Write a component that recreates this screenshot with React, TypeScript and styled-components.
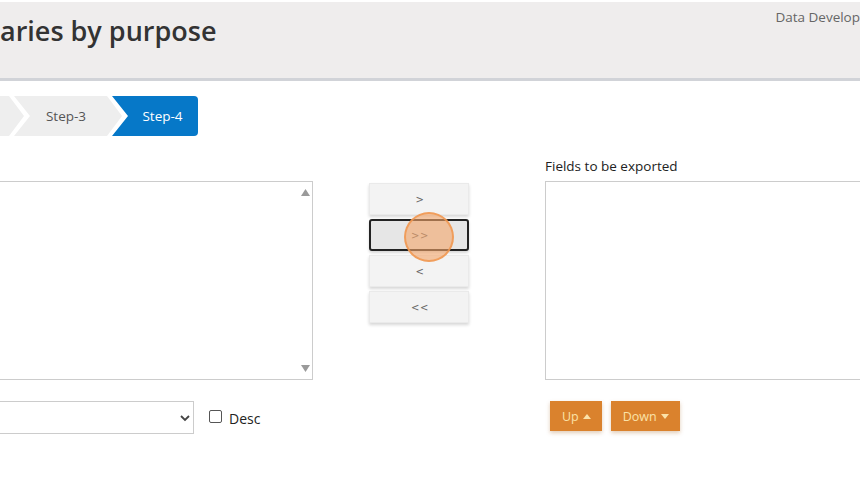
import * as React from "react";
import styled, { createGlobalStyle } from "styled-components";

const GlobalStyle = createGlobalStyle`
  html, body {
    margin: 0;
    padding: 0;
    background: #ffffff;
    overflow: hidden;
  }
  body {
    font-family: "Open Sans", "Noto Sans", sans-serif;
    color: #222222;
  }
`;

const Page = styled.div`
  width: 860px;
  height: 481px;
  padding-top: 2px;
  box-sizing: border-box;
  position: relative;
  overflow: hidden;
`;

const Header = styled.header`
  height: 76px;
  background: #efeded;
  border-bottom: 3px solid #d1d3d8;
  display: flex;
  justify-content: space-between;
  align-items: flex-start;
`;

const Title = styled.h1`
  margin: 11px 0 0 0;
  font-size: 27px;
  font-weight: 600;
  color: #333333;
  line-height: 36px;
`;

const UserName = styled.span`
  margin-top: 6px;
  font-size: 13.5px;
  color: #666666;
  line-height: 18px;
  white-space: nowrap;
`;

const Steps = styled.nav`
  display: flex;
  height: 40px;
  margin-top: 15px;
`;

const Step = styled.div<{ $active?: boolean; $first?: boolean; $last?: boolean; $width: number }>`
  width: ${(p) => p.$width}px;
  height: 40px;
  box-sizing: border-box;
  margin-left: ${(p) => (p.$first ? 0 : -10)}px;
  display: flex;
  align-items: center;
  justify-content: center;
  padding-left: ${(p) => (p.$first ? 0 : 15)}px;
  padding-right: ${(p) => (p.$last ? 0 : 19)}px;
  font-size: 13.5px;
  color: ${(p) => (p.$active ? "#ffffff" : "#555555")};
  background: ${(p) => (p.$active ? "#0678c8" : "#eeeeee")};
  border-radius: ${(p) => (p.$last ? "0 4px 4px 0" : "0")};
  clip-path: ${(p) =>
    p.$last
      ? "polygon(0 0, 100% 0, 100% 100%, 0 100%, 16px 50%)"
      : p.$first
      ? "polygon(0 0, calc(100% - 15px) 0, 100% 50%, calc(100% - 15px) 100%, 0 100%)"
      : "polygon(0 0, calc(100% - 15px) 0, 100% 50%, calc(100% - 15px) 100%, 0 100%, 16px 50%)"};
`;

const Transfer = styled.section`
  display: grid;
  grid-template-columns: 313px 56px 100px 76px 330px;
  grid-template-rows: 20px 199px 33px;
  row-gap: 5px;
  margin-top: 20px;
`;

const TransferBottom = styled.div`
  grid-column: 1 / -1;
  display: grid;
  grid-template-columns: 545px 330px;
  margin-top: 16px;
`;

const Label = styled.label<{ $col: number }>`
  grid-column: ${(p) => p.$col};
  font-size: 13.5px;
  line-height: 20px;
  color: #222222;
`;

const ListBox = styled.div<{ $col: number; $noLeft?: boolean }>`
  grid-column: ${(p) => p.$col};
  grid-row: 2;
  border: 1px solid #cccccc;
  border-left-color: ${(p) => (p.$noLeft ? "transparent" : "#cccccc")};
  background: #ffffff;
  display: flex;
  justify-content: flex-end;
  margin-left: ${(p) => (p.$noLeft ? "-1px" : "0")};
`;

const ScrollTrack = styled.div`
  width: 15px;
  display: flex;
  flex-direction: column;
  justify-content: space-between;
  align-items: center;
  padding: 7px 0 7px 1px;
  box-sizing: border-box;
`;

const ScrollArrow = styled.svg`
  display: block;
`;

const ButtonStack = styled.div`
  grid-column: 3;
  grid-row: 2;
  display: flex;
  flex-direction: column;
  gap: 4px;
  padding-top: 2px;
`;

const MoveButton = styled.button<{ $focused?: boolean }>`
  height: 32px;
  width: 100px;
  box-sizing: border-box;
  border: ${(p) => (p.$focused ? "2px solid #222222" : "1px solid #eaeaea")};
  border-radius: ${(p) => (p.$focused ? "3px" : "0")};
  background: ${(p) => (p.$focused ? "#e6e6e6" : "#f3f3f3")};
  box-shadow: 0 2px 3px rgba(0, 0, 0, 0.16);
  font-family: "DejaVu Sans", sans-serif;
  font-size: 10px;
  color: #666666;
  letter-spacing: 0.5px;
  padding: 0 0 0 2px;
  cursor: pointer;
`;

const SortRow = styled.div`
  display: flex;
  align-items: center;
`;

const SelectBox = styled.div`
  width: 195px;
  height: 33px;
  box-sizing: border-box;
  margin-left: -1px;
  border: 1px solid #cccccc;
  border-left-color: transparent;
  display: flex;
  justify-content: flex-end;
  align-items: center;
  padding-right: 2px;
`;

const CheckLabel = styled.label`
  display: flex;
  align-items: center;
  margin-left: 15px;
  font-size: 14px;
  color: #222222;
  padding-top: 1px;
`;

const CheckBox = styled.span`
  width: 11px;
  height: 11px;
  border: 1px solid #555555;
  border-radius: 2px;
  margin-right: 7px;
  margin-top: -4px;
  background: #ffffff;
`;

const OrderButtons = styled.div`
  display: flex;
  gap: 9px;
  padding-left: 5px;
`;

const OrderButton = styled.button`
  height: 30px;
  padding: 0 11px 0 12px;
  border: none;
  background: #da822d;
  color: #fbe2a8;
  font-family: "Open Sans", sans-serif;
  font-size: 12.5px;
  display: flex;
  align-items: center;
  gap: 4px;
  box-shadow: 0 2px 4px rgba(160, 90, 20, 0.3);
`;

const ClickMark = styled.div`
  position: absolute;
  left: 404px;
  top: 212px;
  width: 50px;
  height: 50px;
  box-sizing: border-box;
  border-radius: 50%;
  border: 2px solid rgba(240, 150, 80, 0.85);
  background: rgba(243, 165, 105, 0.6);
  pointer-events: none;
`;

const Triangle = ({ up }: { up: boolean }) => (
  <ScrollArrow width="9" height="7" viewBox="0 0 9 7">
    <polygon points={up ? "4.5,0 9,7 0,7" : "0,0 9,0 4.5,7"} fill="#9a9a9a" />
  </ScrollArrow>
);

const Caret = ({ up }: { up: boolean }) => (
  <svg width="8" height="5" viewBox="0 0 8 5">
    <polygon points={up ? "4,0 8,5 0,5" : "0,0 8,0 4,5"} fill="#fbe2a8" />
  </svg>
);

export default function App() {
  return (
    <Page>
      <GlobalStyle />
      <Header>
        <Title>aries by purpose</Title>
        <UserName>Data Develop</UserName>
      </Header>

      <Steps>
        <Step $first $width={24} />
        <Step $width={108}>Step-3</Step>
        <Step $active $last $width={86}>
          Step-4
        </Step>
      </Steps>

      <Transfer>
        <Label $col={5}>Fields to be exported</Label>
        <ListBox $col={1} $noLeft>
          <ScrollTrack>
            <Triangle up />
            <Triangle up={false} />
          </ScrollTrack>
        </ListBox>
        <ButtonStack>
          <MoveButton>&gt;</MoveButton>
          <MoveButton $focused>&gt;&gt;</MoveButton>
          <MoveButton>&lt;</MoveButton>
          <MoveButton>&lt;&lt;</MoveButton>
        </ButtonStack>
        <ListBox $col={5} />
        <TransferBottom>
          <SortRow>
            <SelectBox>
              <svg width="12" height="8" viewBox="0 0 12 8">
                <polyline points="2,2 6,6 10,2" fill="none" stroke="#444" strokeWidth="1.8" />
              </svg>
            </SelectBox>
            <CheckLabel>
              <CheckBox />
              Desc
            </CheckLabel>
          </SortRow>
          <OrderButtons>
            <OrderButton>
              Up <Caret up />
            </OrderButton>
            <OrderButton>
              Down <Caret up={false} />
            </OrderButton>
          </OrderButtons>
        </TransferBottom>
      </Transfer>

      <ClickMark />
    </Page>
  );
}
